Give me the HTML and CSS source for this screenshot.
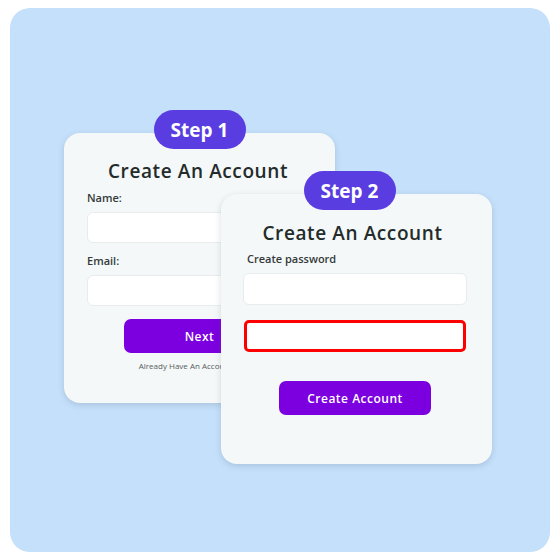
FILE: index.html
```html
<!DOCTYPE html>
<html lang="en">
<head>
  <meta charset="UTF-8">
  <meta name="viewport" content="width=device-width, initial-scale=1.0">
  <title>Create An Account - Steps</title>
  <link rel="stylesheet" href="styles.css">
</head>
<body>
  <div class="panel">
    <div class="card card-step1">
      <div class="step-badge">Step 1</div>
      <h2 class="card-title">Create An Account</h2>
      <label class="field-label">Name:</label>
      <div class="field"></div>
      <label class="field-label">Email:</label>
      <div class="field"></div>
      <button class="btn btn-next">Next</button>
      <p class="login-link">Already Have An Account? Log In</p>
    </div>

    <div class="card card-step2">
      <div class="step-badge">Step 2</div>
      <h2 class="card-title">Create An Account</h2>
      <label class="field-label">Create password</label>
      <div class="field"></div>
      <div class="field field-error"></div>
      <button class="btn btn-create">Create Account</button>
    </div>
  </div>
</body>
</html>
```

FILE: styles.css
```css
* {
  margin: 0;
  padding: 0;
  box-sizing: border-box;
}

body {
  width: 560px;
  height: 560px;
  background: #ffffff;
  font-family: 'Open Sans', 'Liberation Sans', sans-serif;
  color: #263030;
  padding: 8px 10px;
}

.panel {
  position: relative;
  width: 540px;
  height: 544px;
  background: #c5e0fa;
  border-radius: 20px;
}

.card {
  position: absolute;
  width: 271px;
  height: 270px;
  background: #f5f8f8;
  border-radius: 16px;
  box-shadow: 0 2px 6px rgba(60, 80, 110, 0.2);
  display: flex;
  flex-direction: column;
  padding: 26px 23px 0;
}

.card-step1 {
  left: 54px;
  top: 125px;
}

.card-step2 {
  left: 211px;
  top: 186px;
  padding: 27px 25px 0 22px;
}

.step-badge {
  position: absolute;
  top: -23px;
  left: 50%;
  transform: translateX(-50%);
  width: 92px;
  height: 39px;
  border-radius: 20px;
  background: #5a3de0;
  color: #ffffff;
  font-size: 19px;
  font-weight: 700;
  display: flex;
  align-items: center;
  justify-content: center;
}

.card-step2 .step-badge {
  margin-left: -7px;
}

.card-title {
  font-family: 'Open Sans', sans-serif;
  font-size: 19px;
  font-weight: 600;
  line-height: 24px;
  letter-spacing: 0.6px;
  text-align: center;
  color: #232b2b;
}

.card-step1 .card-title {
  margin-left: -3px;
}

.card-step2 .card-title {
  margin-right: 5px;
}

.field-label {
  display: block;
  font-size: 11px;
  font-weight: 600;
  line-height: 14px;
  color: #333a3a;
  margin-top: 8px;
  margin-bottom: 7px;
}

.field {
  height: 31px;
  background: #ffffff;
  border: 1px solid #e9ecec;
  border-radius: 6px;
}

.field + .field-label {
  margin-top: 11px;
}

.card-step2 .field-label {
  margin-top: 7px;
  margin-left: 4px;
}

.card-step2 .field {
  height: 32px;
}

.field-error {
  margin-top: 15px;
  margin-left: 1px;
  margin-right: 1px;
  border: 3px solid #ff0000;
  border-radius: 5px;
}

.btn {
  align-self: center;
  width: 152px;
  height: 34px;
  border: none;
  border-radius: 7px;
  background: #7c00df;
  color: #ffffff;
  font-family: 'Open Sans', sans-serif;
  font-size: 12px;
  font-weight: 600;
  letter-spacing: 0.5px;
  cursor: pointer;
}

.btn-next {
  margin-top: 13px;
}

.btn-create {
  margin-top: 29px;
}

.login-link {
  margin-top: 8px;
  font-size: 8px;
  line-height: 10px;
  color: #555c5c;
  text-align: center;
}
```
